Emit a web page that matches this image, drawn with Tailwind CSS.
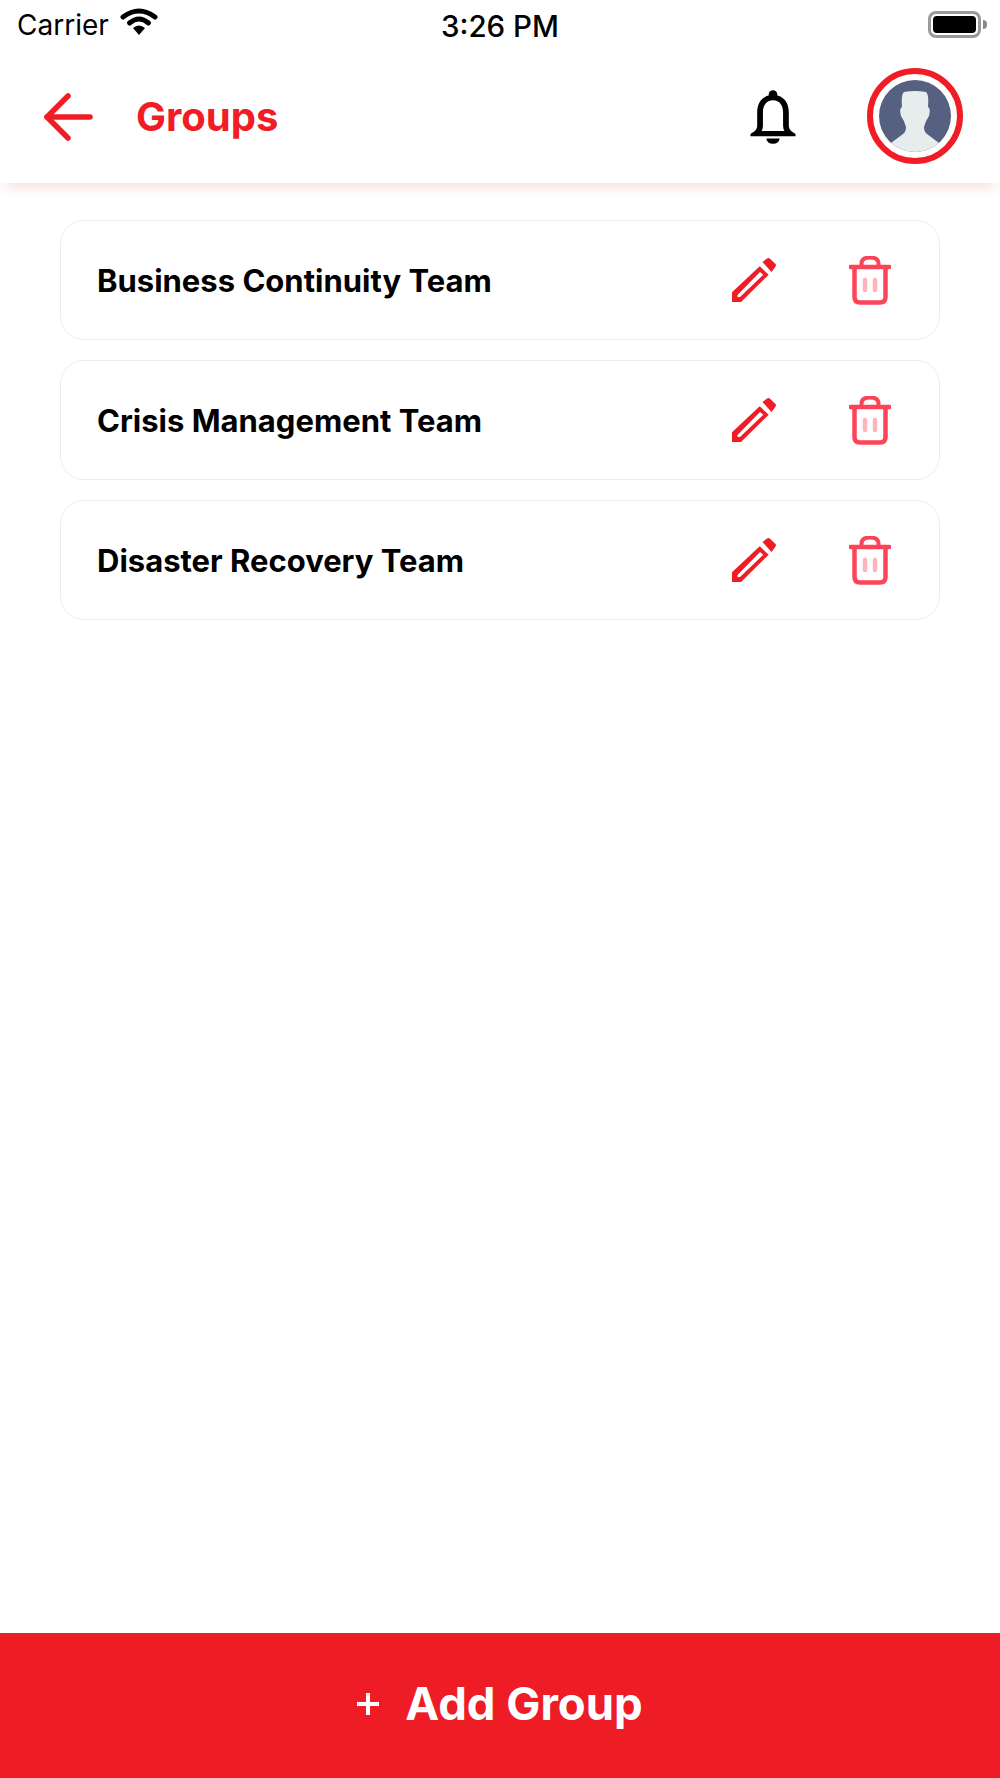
<!DOCTYPE html>
<html lang="en">
<head>
    <meta charset="UTF-8">
    <meta name="viewport" content="width=device-width, initial-scale=1.0">
    <title>Groups</title>
    <script src="https://cdn.jsdelivr.net/npm/@tailwindcss/browser@4"></script>
</head>
<body class="bg-white font-['Inter',sans-serif]">
    <div class="flex flex-col h-[1778px] w-[1000px] overflow-hidden">
        <!-- status bar -->
        <div class="relative h-[50px] shrink-0 flex items-center justify-between pl-[17px] pr-[13px] text-black">
            <div class="flex items-center gap-[11px]">
                <span class="text-[28px] leading-none font-normal">Carrier</span>
                <svg class="w-[38px] h-[28px] mb-[6px]" viewBox="0 0 38 28" fill="none">
                    <path d="M3 9 Q19 -3 35 9" stroke="#000" stroke-width="5" stroke-linecap="round"/>
                    <path d="M9.5 15 Q19 7 28.5 15" stroke="#000" stroke-width="5" stroke-linecap="round"/>
                    <path d="M13 20 Q19 15 25 20 L19 27 Z" fill="#000"/>
                </svg>
            </div>
            <span class="absolute left-[441px] top-[10px] text-[29.5px] leading-[32px] font-medium">3:26 PM</span>
            <div class="flex items-center gap-[2px] mb-[2px]">
                <div class="w-[53px] h-[27px] rounded-[8px] border-[3px] border-[#9a9a9a] p-[2px]">
                    <div class="w-full h-full rounded-[4px] bg-black"></div>
                </div>
                <div class="w-[4px] h-[9px] rounded-r bg-[#8a8a8a]"></div>
            </div>
        </div>

        <!-- header -->
        <div class="h-[133px] shrink-0 flex items-center bg-white shadow-[0_10px_12px_-6px_rgba(240,28,38,0.16)] z-10">
            <svg class="ml-[44px] w-[50px] h-[48px]" viewBox="0 0 50 48" fill="none" stroke="#f01c26" stroke-width="5.5" stroke-linecap="round" stroke-linejoin="round">
                <path d="M3 24 H46"/>
                <path d="M24 3 L3 24 L24 45"/>
            </svg>
            <h1 class="ml-[42px] text-[40px] leading-none font-bold text-[#f01c26]">Groups</h1>
            <svg class="ml-auto w-[46px] h-[56px]" viewBox="0 0 48 58" fill="#000">
                <circle cx="24" cy="5.5" r="4.5"/>
                <path d="M24 6 C13 6 7.5 14 7.5 24 V38 Q7.5 43 1.5 46 Q0 47 0.5 49 H47.5 Q48 47 46.5 46 Q40.5 43 40.5 38 V24 C40.5 14 35 6 24 6 Z M24 11.5 C31 11.5 34.5 17 34.5 24 V38 Q34.5 41 36 43.5 H12 Q13.5 41 13.5 38 V24 C13.5 17 17 11.5 24 11.5 Z" fill-rule="evenodd"/>
                <path d="M17 51.5 H31 Q30 57 24 57 Q18 57 17 51.5 Z"/>
            </svg>
            <div class="ml-[71px] mr-[37px] mt-[-2px] w-[96px] h-[96px] rounded-full border-[6px] border-[#f01c26] p-[6px]">
                <svg class="w-full h-full" viewBox="0 0 72 72">
                    <defs><clipPath id="avatar-clip"><circle cx="36" cy="36" r="36"/></clipPath></defs>
                    <circle cx="36" cy="36" r="36" fill="#566182"/>
                    <path clip-path="url(#avatar-clip)" d="M25 12 Q36 10 47 12 Q50 14 49 27 Q52 28 50 36 Q47 40 45 47 Q45 52 48 54 L60 63 L60 80 L12 80 L12 63 L24 54 Q27 52 27 47 Q25 40 22 36 Q20 28 23 27 Q22 14 25 12 Z" fill="#e7eced"/>
                </svg>
            </div>
        </div>

        <!-- group list -->
        <div class="flex-1 flex flex-col gap-[20px] pt-[37px] px-[60px]">
            <div class="h-[120px] flex items-center rounded-[24px] border-[1.5px] border-[#ededed] pl-[36px] pr-[48px]">
                <span class="flex-1 text-[31px] leading-none font-bold text-black">Business Continuity Team</span>
                <svg class="w-[45px] h-[45px]" viewBox="0 0 45 45"><path d="M0 44 V34.3 L27.7 8.3 L36.7 16.7 L9 44 Z M5.5 37 V39 H8 L31.3 16.7 L28 14 Z" fill="#f01c26" fill-rule="evenodd"/><path d="M30.5 4 L35 0.5 Q36.7 -0.5 38 0.8 L43.5 6 Q44.5 7.5 43.3 9 L39.5 14 Z" fill="#f01c26"/></svg>
                <svg class="ml-[72px] w-[42px] h-[49px]" viewBox="0 0 42 49" fill="none"><path d="M12.5 9 V7.5 Q12.5 1.5 21 1.5 Q29.5 1.5 29.5 7.5 V9" stroke="#fd4358" stroke-width="4"/><path d="M1.5 11 H40.5" stroke="#fd4358" stroke-width="4.5" stroke-linecap="round"/><path d="M5.5 11 V41 Q5.5 46.5 11 46.5 H31 Q36.5 46.5 36.5 41 V11" stroke="#fd4358" stroke-width="4.5"/><path d="M16 24 V34 M26 24 V34" stroke="#ffb3bb" stroke-width="4.5" stroke-linecap="round"/></svg>
            </div>
            <div class="h-[120px] flex items-center rounded-[24px] border-[1.5px] border-[#ededed] pl-[36px] pr-[48px]">
                <span class="flex-1 text-[31px] leading-none font-bold text-black">Crisis Management Team</span>
                <svg class="w-[45px] h-[45px]" viewBox="0 0 45 45"><path d="M0 44 V34.3 L27.7 8.3 L36.7 16.7 L9 44 Z M5.5 37 V39 H8 L31.3 16.7 L28 14 Z" fill="#f01c26" fill-rule="evenodd"/><path d="M30.5 4 L35 0.5 Q36.7 -0.5 38 0.8 L43.5 6 Q44.5 7.5 43.3 9 L39.5 14 Z" fill="#f01c26"/></svg>
                <svg class="ml-[72px] w-[42px] h-[49px]" viewBox="0 0 42 49" fill="none"><path d="M12.5 9 V7.5 Q12.5 1.5 21 1.5 Q29.5 1.5 29.5 7.5 V9" stroke="#fd4358" stroke-width="4"/><path d="M1.5 11 H40.5" stroke="#fd4358" stroke-width="4.5" stroke-linecap="round"/><path d="M5.5 11 V41 Q5.5 46.5 11 46.5 H31 Q36.5 46.5 36.5 41 V11" stroke="#fd4358" stroke-width="4.5"/><path d="M16 24 V34 M26 24 V34" stroke="#ffb3bb" stroke-width="4.5" stroke-linecap="round"/></svg>
            </div>
            <div class="h-[120px] flex items-center rounded-[24px] border-[1.5px] border-[#ededed] pl-[36px] pr-[48px]">
                <span class="flex-1 text-[31px] leading-none font-bold text-black">Disaster Recovery Team</span>
                <svg class="w-[45px] h-[45px]" viewBox="0 0 45 45"><path d="M0 44 V34.3 L27.7 8.3 L36.7 16.7 L9 44 Z M5.5 37 V39 H8 L31.3 16.7 L28 14 Z" fill="#f01c26" fill-rule="evenodd"/><path d="M30.5 4 L35 0.5 Q36.7 -0.5 38 0.8 L43.5 6 Q44.5 7.5 43.3 9 L39.5 14 Z" fill="#f01c26"/></svg>
                <svg class="ml-[72px] w-[42px] h-[49px]" viewBox="0 0 42 49" fill="none"><path d="M12.5 9 V7.5 Q12.5 1.5 21 1.5 Q29.5 1.5 29.5 7.5 V9" stroke="#fd4358" stroke-width="4"/><path d="M1.5 11 H40.5" stroke="#fd4358" stroke-width="4.5" stroke-linecap="round"/><path d="M5.5 11 V41 Q5.5 46.5 11 46.5 H31 Q36.5 46.5 36.5 41 V11" stroke="#fd4358" stroke-width="4.5"/><path d="M16 24 V34 M26 24 V34" stroke="#ffb3bb" stroke-width="4.5" stroke-linecap="round"/></svg>
            </div>
        </div>

        <!-- add button -->
        <button class="h-[145px] shrink-0 flex items-center justify-center bg-[#ee1c25] text-white pb-[3px]">
            <svg class="w-[22px] h-[22px] mr-[26px]" viewBox="0 0 22 22" fill="none" stroke="#fff" stroke-width="4"><path d="M11 0 V22 M0 11 H22"/></svg>
            <span class="text-[45.5px] leading-none font-bold">Add Group</span>
        </button>
    </div>
</body>
</html>
